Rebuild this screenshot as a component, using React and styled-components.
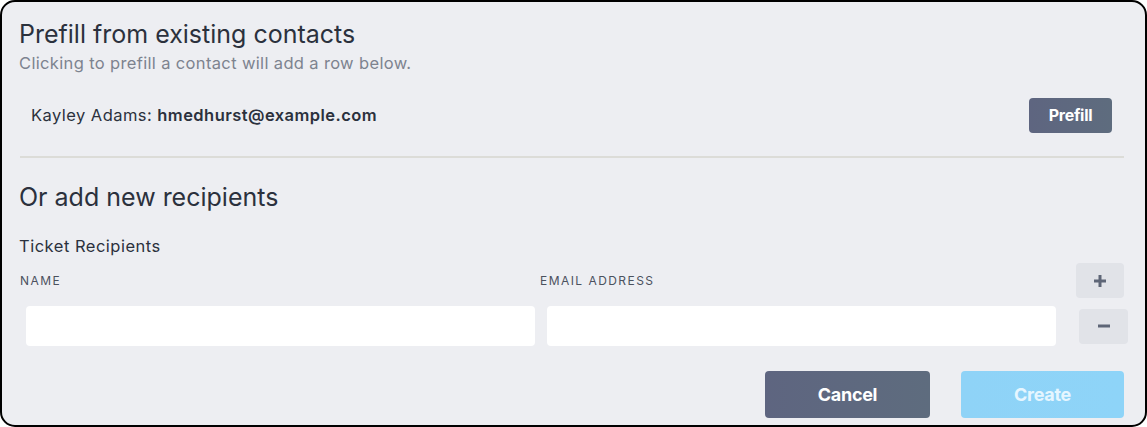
import React from "react";
import styled, { createGlobalStyle } from "styled-components";

const GlobalStyle = createGlobalStyle`
  html, body {
    margin: 0;
    padding: 0;
    background: #ffffff;
  }
  body {
    font-family: "Inter", "Noto Sans", sans-serif;
    color: #2b313d;
  }
`;

const Frame = styled.div`
  box-sizing: border-box;
  width: 1147px;
  height: 427px;
  background: #edeef2;
  border: 2.5px solid #000;
  border-radius: 15px;
  padding: 16px 21px 0 17px;
  overflow: hidden;
`;

const Heading = styled.h2`
  margin: 0;
  font-size: 25px;
  font-weight: 400;
  line-height: 32px;
  color: #2b313d;
`;

const Sub = styled.p`
  margin: 2px 0 0;
  font-size: 16.5px;
  letter-spacing: 0.35px;
  line-height: 22px;
  color: #7d838f;
`;

const ContactRow = styled.div`
  display: flex;
  align-items: center;
  justify-content: space-between;
  padding: 0 12px 0 12px;
  height: 36px;
  margin-top: 23px;
`;

const ContactText = styled.span`
  font-size: 16.5px;
  letter-spacing: 0.45px;
  color: #2b313d;
  b {
    font-weight: 600;
  }
`;

const Button = styled.button`
  border: none;
  border-radius: 4px;
  font-family: "Inter", sans-serif;
  font-weight: 700;
  letter-spacing: -0.3px;
  cursor: pointer;
  background: ${(p) =>
    p.$variant === "primary"
      ? "linear-gradient(90deg, #8fd3f7, #8ed4f8)"
      : "linear-gradient(90deg, #5e6580, #5e6c7e)"};
  color: ${(p) => (p.$variant === "primary" ? "#e6f6ff" : "#fff")};
`;

const SmallButton = styled(Button)`
  width: 83px;
  height: 35px;
  font-size: 16px;
`;

const Divider = styled.hr`
  border: none;
  border-top: 2px solid #dcdcd8;
  margin: 23px 0 0 1px;
  width: 1104px;
`;

const Section = styled.div`
  margin-top: 23px;
`;

const Label = styled.div`
  font-size: 16.5px;
  letter-spacing: 0.5px;
  line-height: 22px;
  color: #2b313d;
  margin-top: 22px;
`;

const Grid = styled.div`
  display: grid;
  grid-template-columns: 520px 536px 52px;
  grid-template-rows: 35px 44px;
  row-gap: 6px;
  margin-top: 6px;
  margin-left: 1px;
  align-items: center;
`;

const ColLabel = styled.div`
  font-size: 12px;
  letter-spacing: 1.45px;
  text-transform: uppercase;
  color: #4b515e;
  align-self: center;
`;

const Input = styled.input`
  box-sizing: border-box;
  height: 40px;
  width: 509px;
  margin-left: ${(p) => p.$offset}px;
  border: none;
  border-radius: 4px;
  background: #fff;
  outline: none;
`;

const IconButton = styled.button`
  width: ${(p) => p.$w}px;
  height: 35px;
  margin-left: ${(p) => p.$offset}px;
  border: none;
  border-radius: 4px;
  background: #e1e3e8;
  display: flex;
  align-items: center;
  justify-content: center;
  padding: 0;
`;

const Footer = styled.div`
  display: flex;
  justify-content: flex-end;
  gap: 31px;
  margin-top: 23px;
`;

const BigButton = styled(Button)`
  width: ${(p) => p.$w}px;
  height: 47px;
  font-size: 18px;
`;

export default function App() {
  return (
    <>
      <GlobalStyle />
      <Frame>
        <Heading>Prefill from existing contacts</Heading>
        <Sub>Clicking to prefill a contact will add a row below.</Sub>
        <ContactRow>
          <ContactText>
            Kayley Adams: <b>hmedhurst@example.com</b>
          </ContactText>
          <SmallButton>Prefill</SmallButton>
        </ContactRow>
        <Divider />
        <Section>
          <Heading>Or add new recipients</Heading>
          <Label>Ticket Recipients</Label>
          <Grid>
            <ColLabel>Name</ColLabel>
            <ColLabel>Email Address</ColLabel>
            <IconButton $w={48} $offset={0}>
              <svg width="14" height="14" viewBox="0 0 14 14">
                <path d="M7 1v12M1 7h12" stroke="#5e6677" strokeWidth="3" />
              </svg>
            </IconButton>
            <Input $offset={6} />
            <Input $offset={7} />
            <IconButton $w={49} $offset={3}>
              <svg width="14" height="4" viewBox="0 0 14 4">
                <path d="M1 2h12" stroke="#5e6677" strokeWidth="3" />
              </svg>
            </IconButton>
          </Grid>
        </Section>
        <Footer>
          <BigButton $w={165}>Cancel</BigButton>
          <BigButton $w={163} $variant="primary">
            Create
          </BigButton>
        </Footer>
      </Frame>
    </>
  );
}
